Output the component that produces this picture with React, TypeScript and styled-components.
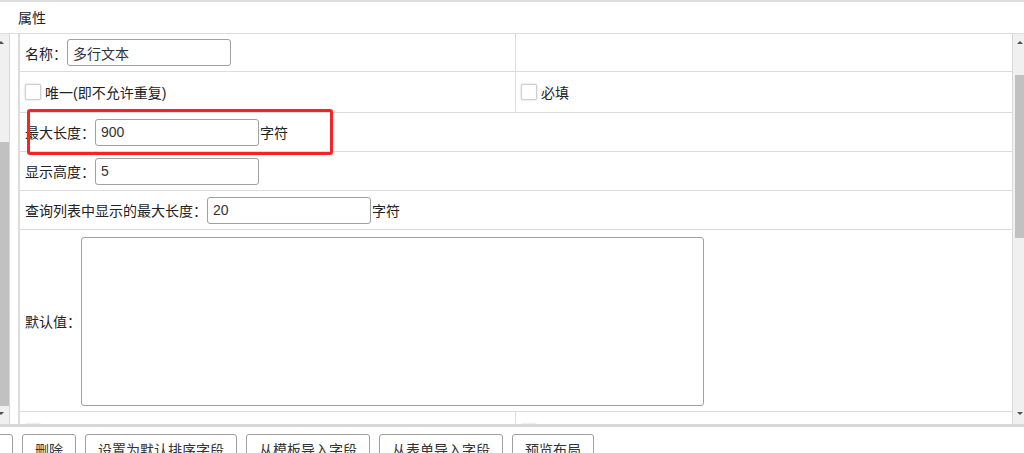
import React from "react";
import styled, { createGlobalStyle } from "styled-components";

const GlobalStyle = createGlobalStyle`
  html, body {
    margin: 0;
    padding: 0;
    background: #ffffff;
  }
  body {
    font-family: "Liberation Sans", "Noto Sans CJK SC", sans-serif;
    font-size: 14px;
    color: #333333;
  }
`;

const Page = styled.div`
  position: relative;
  width: 1024px;
  height: 453px;
  overflow: hidden;
  display: flex;
  flex-direction: column;
  border-top: 2px solid #dcdcdc;
  box-sizing: border-box;
`;

const Header = styled.div`
  height: 32px;
  flex: none;
  display: flex;
  align-items: center;
  padding-left: 18px;
  padding-bottom: 1px;
  box-sizing: border-box;
  border-bottom: 1px solid #dcdcdc;
  color: #222;
`;

const Body = styled.div`
  height: 390px;
  flex: none;
  display: flex;
`;

const ScrollTrack = styled.div<{ $side: "left" | "right" }>`
  flex: none;
  width: ${(p) => (p.$side === "left" ? "9px" : "11px")};
  background: #f0f0f0;
  ${(p) =>
    p.$side === "left"
      ? "border-right: 1px solid #d8d8d8;"
      : "border-left: 1px solid #d8d8d8;"}
  display: flex;
  flex-direction: column;
  overflow: hidden;
`;

const Arrow = styled.div<{ $dir: "up" | "down"; $x: number }>`
  flex: none;
  height: 0;
  width: 0;
  margin-left: ${(p) => p.$x}px;
  margin-top: ${(p) => (p.$dir === "up" ? "7px" : "0")};
  margin-bottom: ${(p) => (p.$dir === "down" ? "9px" : "0")};
  border-left: 3px solid transparent;
  border-right: 3px solid transparent;
  ${(p) =>
    p.$dir === "up"
      ? "border-bottom: 3px solid #505050;"
      : "border-top: 3px solid #505050;"}
`;

const Thumb = styled.div<{ $top: number; $height: number; $x: number }>`
  flex: none;
  margin-top: ${(p) => p.$top}px;
  margin-left: ${(p) => p.$x}px;
  height: ${(p) => p.$height}px;
  background: #c1c1c1;
`;

const Spacer = styled.div`
  flex: 1;
`;

const Gutter = styled.div`
  flex: none;
  width: 8px;
`;

const Table = styled.div`
  flex: 1;
  min-width: 0;
  border-left: 2px solid #dcdcdc;
  overflow: hidden;
  display: flex;
  flex-direction: column;
`;

const Row = styled.div<{ $height: number }>`
  flex: none;
  display: flex;
  height: ${(p) => p.$height}px;
  border-bottom: 1px solid #dcdcdc;
  box-sizing: border-box;
`;

const Cell = styled.div<{ $wide?: boolean }>`
  display: flex;
  align-items: center;
  padding-left: 5px;
  box-sizing: border-box;
  white-space: nowrap;
  ${(p) =>
    p.$wide
      ? "flex: 1;"
      : "flex: none; width: 496px; border-right: 1px solid #dcdcdc;"}
  &:last-child {
    border-right: none;
  }
`;

const Label = styled.span`
  color: #222;
`;

const TextInput = styled.input`
  width: 164px;
  height: 27px;
  box-sizing: border-box;
  border: 1px solid #a0a0a0;
  border-radius: 3px;
  padding: 0 5px;
  font-family: "Liberation Sans", "Noto Sans CJK SC", sans-serif;
  font-size: 14px;
  color: #333;
  background: #fff;
  outline: none;
`;

const Suffix = styled.span`
  margin-left: 1px;
  color: #222;
`;

const Check = styled.span`
  display: inline-block;
  width: 16px;
  height: 16px;
  box-sizing: border-box;
  border: 1px solid #d0d0d0;
  border-radius: 2px;
  background: #fff;
  box-shadow: 0 0 2px rgba(0, 0, 0, 0.25);
  margin-right: 4px;
`;

const TextArea = styled.textarea`
  width: 623px;
  height: 169px;
  box-sizing: border-box;
  border: 1px solid #a0a0a0;
  border-radius: 3px;
  resize: none;
  outline: none;
  background: #fff;
  margin-top: 2px;
`;

const BottomRule = styled.div`
  height: 3px;
  flex: none;
  background: #d9d9d9;
`;

const Toolbar = styled.div`
  flex: 1;
  display: flex;
  gap: 9px;
  padding-top: 7px;
  margin-left: -69px;
`;

const Button = styled.button`
  flex: none;
  height: 30px;
  padding: 0 12px;
  border: 1px solid #a0a0a0;
  border-radius: 3px;
  background: #fff;
  font-family: "Liberation Sans", "Noto Sans CJK SC", sans-serif;
  font-size: 14px;
  color: #333;
`;

const Highlight = styled.div`
  position: absolute;
  left: 27px;
  top: 107px;
  width: 306px;
  height: 46px;
  box-sizing: border-box;
  border: 3px solid #f42525;
  border-radius: 3px;
  pointer-events: none;
`;

const buttons = ["新增字段", "删除", "设置为默认排序字段", "从模板导入字段", "从表单导入字段", "预览布局"];

export default function App() {
  return (
    <>
      <GlobalStyle />
      <Page>
        <Header>属性</Header>
        <Body>
          <ScrollTrack $side="left">
            <Arrow $dir="up" $x={-2} />
            <Thumb $top={98} $height={264} $x={0} />
            <Spacer />
            <Arrow $dir="down" $x={-2} />
          </ScrollTrack>
          <Gutter />
          <Table>
            <Row $height={38}>
              <Cell>
                <Label>名称：</Label>
                <TextInput defaultValue="多行文本" />
              </Cell>
              <Cell $wide />
            </Row>
            <Row $height={41}>
              <Cell>
                <Check />
                <Label>唯一(即不允许重复)</Label>
              </Cell>
              <Cell $wide>
                <Check />
                <Label>必填</Label>
              </Cell>
            </Row>
            <Row $height={39}>
              <Cell $wide>
                <Label>最大长度：</Label>
                <TextInput defaultValue="900" />
                <Suffix>字符</Suffix>
              </Cell>
            </Row>
            <Row $height={39}>
              <Cell $wide>
                <Label>显示高度：</Label>
                <TextInput defaultValue="5" />
              </Cell>
            </Row>
            <Row $height={39}>
              <Cell $wide>
                <Label>查询列表中显示的最大长度：</Label>
                <TextInput defaultValue="20" />
                <Suffix>字符</Suffix>
              </Cell>
            </Row>
            <Row $height={182}>
              <Cell $wide>
                <Label>默认值：</Label>
                <TextArea />
              </Cell>
            </Row>
            <Row $height={41}>
              <Cell>
                <Check />
                <Label>只读</Label>
              </Cell>
              <Cell $wide>
                <Check />
                <Label>隐藏</Label>
              </Cell>
            </Row>
          </Table>
          <ScrollTrack $side="right">
            <Arrow $dir="up" $x={4} />
            <Thumb $top={31} $height={163} $x={2} />
            <Spacer />
            <Arrow $dir="down" $x={4} />
          </ScrollTrack>
        </Body>
        <BottomRule />
        <Toolbar>
          {buttons.map((b) => (
            <Button key={b}>{b}</Button>
          ))}
        </Toolbar>
        <Highlight />
      </Page>
    </>
  );
}
